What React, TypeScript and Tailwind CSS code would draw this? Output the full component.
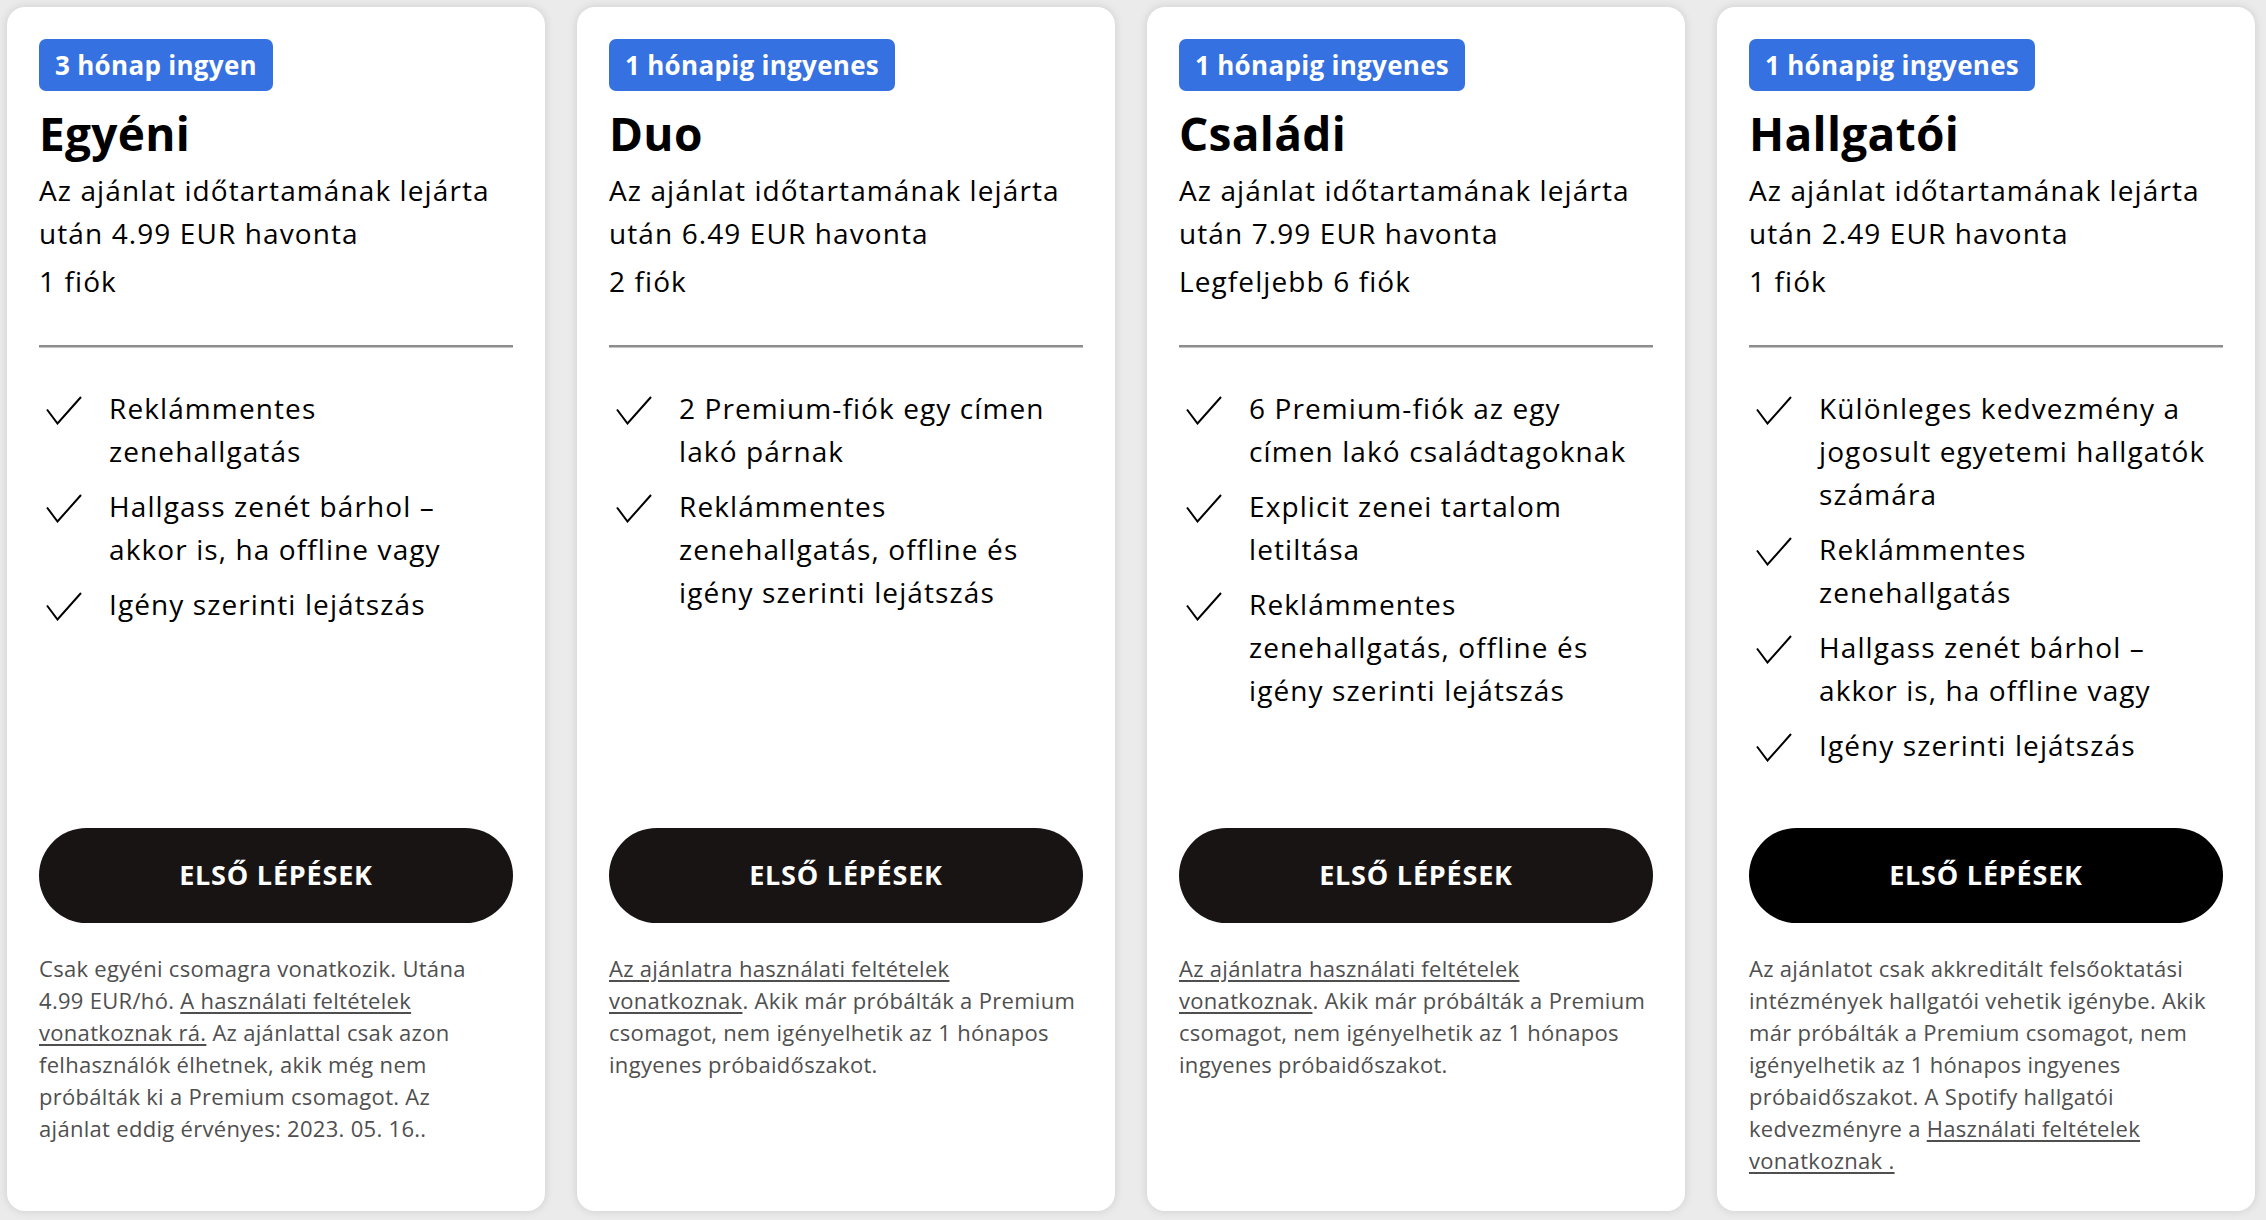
import React from "react";

type Plan = {
  badge: string;
  name: string;
  price: string;
  accounts: string;
  features: string[];
  dark?: boolean;
  note: React.ReactNode;
};

const Link = ({ children }: { children: React.ReactNode }) => (
  <a href="#" className="underline underline-offset-[3px]">
    {children}
  </a>
);

// feature lines are broken where the original page breaks them
const PLANS: Plan[] = [
  {
    badge: "3 hónap ingyen",
    name: "Egyéni",
    price: "4.99",
    accounts: "1 fiók",
    features: [
      "Reklámmentes\nzenehallgatás",
      "Hallgass zenét bárhol –\nakkor is, ha offline vagy",
      "Igény szerinti lejátszás",
    ],
    note: (
      <>
        Csak egyéni csomagra vonatkozik. Utána
        <br />
        4.99 EUR/hó. <Link>A használati feltételek</Link>
        <br />
        <Link>vonatkoznak rá.</Link> Az ajánlattal csak azon
        <br />
        felhasználók élhetnek, akik még nem
        <br />
        próbálták ki a Premium csomagot. Az
        <br />
        ajánlat eddig érvényes: 2023. 05. 16..
      </>
    ),
  },
  {
    badge: "1 hónapig ingyenes",
    name: "Duo",
    price: "6.49",
    accounts: "2 fiók",
    features: [
      "2 Premium-fiók egy címen\nlakó párnak",
      "Reklámmentes\nzenehallgatás, offline és\nigény szerinti lejátszás",
    ],
    note: (
      <>
        <Link>Az ajánlatra használati feltételek</Link>
        <br />
        <Link>vonatkoznak</Link>. Akik már próbálták a Premium
        <br />
        csomagot, nem igényelhetik az 1 hónapos
        <br />
        ingyenes próbaidőszakot.
      </>
    ),
  },
  {
    badge: "1 hónapig ingyenes",
    name: "Családi",
    price: "7.99",
    accounts: "Legfeljebb 6 fiók",
    features: [
      "6 Premium-fiók az egy\ncímen lakó családtagoknak",
      "Explicit zenei tartalom\nletiltása",
      "Reklámmentes\nzenehallgatás, offline és\nigény szerinti lejátszás",
    ],
    note: (
      <>
        <Link>Az ajánlatra használati feltételek</Link>
        <br />
        <Link>vonatkoznak</Link>. Akik már próbálták a Premium
        <br />
        csomagot, nem igényelhetik az 1 hónapos
        <br />
        ingyenes próbaidőszakot.
      </>
    ),
  },
  {
    badge: "1 hónapig ingyenes",
    name: "Hallgatói",
    price: "2.49",
    accounts: "1 fiók",
    dark: true,
    features: [
      "Különleges kedvezmény a\njogosult egyetemi hallgatók\nszámára",
      "Reklámmentes\nzenehallgatás",
      "Hallgass zenét bárhol –\nakkor is, ha offline vagy",
      "Igény szerinti lejátszás",
    ],
    note: (
      <>
        Az ajánlatot csak akkreditált felsőoktatási
        <br />
        intézmények hallgatói vehetik igénybe. Akik
        <br />
        már próbálták a Premium csomagot, nem
        <br />
        igényelhetik az 1 hónapos ingyenes
        <br />
        próbaidőszakot. A Spotify hallgatói
        <br />
        kedvezményre a <Link>Használati feltételek</Link>
        <br />
        <Link>vonatkoznak .</Link>
      </>
    ),
  },
];

const Check = () => (
  <svg width="36" height="29" viewBox="0 0 36 29" className="shrink-0 ml-[7px] mt-[9px]">
    <path d="M1 13.5 L11.5 27.5 L35 1" fill="none" stroke="#000" strokeWidth="2" />
  </svg>
);

const PlanCard = ({ plan }: { plan: Plan }) => (
  <div className="flex flex-col rounded-[18px] bg-white px-8 pt-8 pb-8 shadow-[0_0_10px_rgba(0,0,0,0.13)]">
    <div className="self-start flex items-center h-[52px] px-[16px] rounded-[7px] bg-[#3671e1] text-white text-[26px] font-bold tracking-[0.3px]">
      {plan.badge}
    </div>
    <h2 className="mt-[14px] text-[46px] leading-[56px] font-bold text-black tracking-[0.3px]">
      {plan.name}
    </h2>
    <div className="mt-[8px] text-[28px] leading-[43px] text-black tracking-[1.1px]">
      <p>Az ajánlat időtartamának lejárta után {plan.price} EUR havonta</p>
      <p className="mt-[5px]">{plan.accounts}</p>
    </div>
    <div className="mt-[42px] h-[3px] bg-[#8c8c8c] border-b border-[#c4c4c4]" />
    <ul className="min-h-[409px] mt-[39px] flex flex-col gap-[12px]">
      {plan.features.map((f, i) => (
        <li key={i} className="flex gap-[27px] text-[28px] leading-[43px] text-black tracking-[1.1px]">
          <Check />
          <span className="whitespace-pre">{f}</span>
        </li>
      ))}
    </ul>
    <button
      className={`mt-8 h-[95px] w-full shrink-0 rounded-full text-white text-[27px] font-bold tracking-[0.8px] ${
        plan.dark ? "bg-black" : "bg-[#191414]"
      }`}
    >
      ELSŐ LÉPÉSEK
    </button>
    <p className="mt-[29px] whitespace-nowrap text-[22px] leading-[32px] text-[#4f4f4f] tracking-[0.3px]">
      {plan.note}
    </p>
  </div>
);

export default function App() {
  return (
    <div
      className="h-[1220px] w-[2266px] bg-[#ebebeb] grid grid-cols-4 gap-8 pl-[7px] pr-[11px] pt-[7px] pb-[9px]"
      style={{ fontFamily: "'Open Sans', 'Noto Sans', sans-serif" }}
    >
      {PLANS.map((p) => (
        <PlanCard key={p.name} plan={p} />
      ))}
    </div>
  );
}
